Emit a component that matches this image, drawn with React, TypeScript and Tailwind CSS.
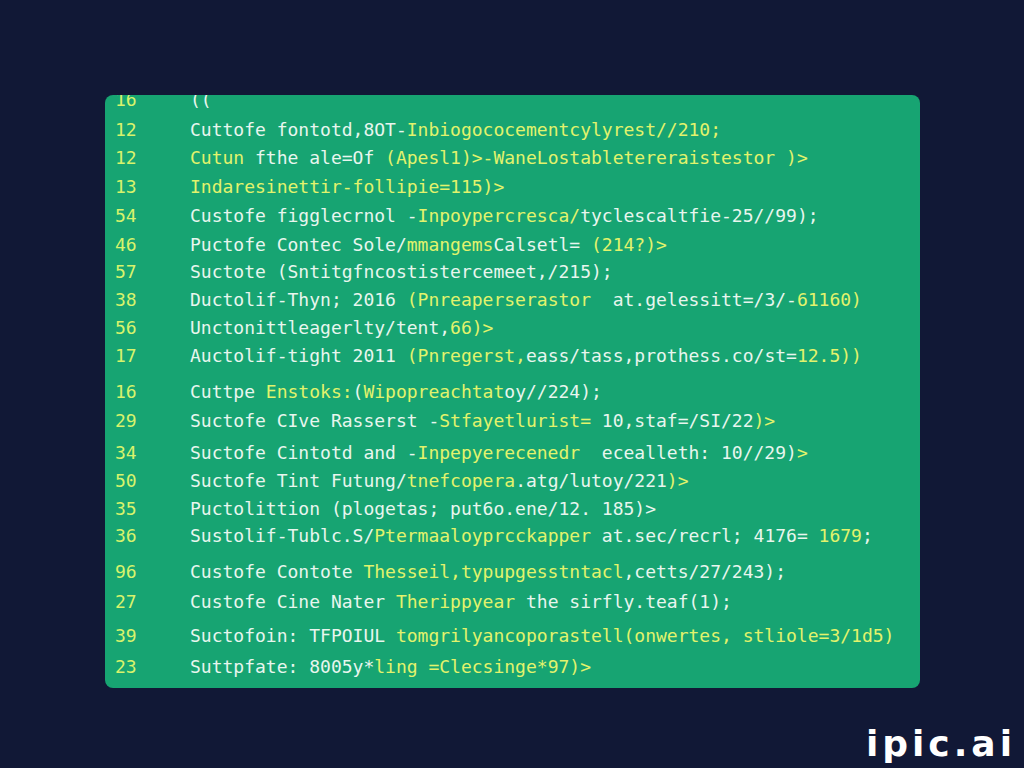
type Seg = [string, 'w' | 'y']

type Line = { n: string; gap: string; segs: Seg[] }

const lines: Line[] = [
  { n: '16', gap: '-mt-[9px]', segs: [['((', 'w']] },
  { n: '12', gap: 'mt-[2px]', segs: [['Cuttofe fontotd,8OT-', 'w'], ['Inbiogococementcylyrest//210;', 'y']] },
  { n: '12', gap: 'mt-0', segs: [['Cutun', 'y'], [' fthe ale=Of ', 'w'], ['(Apesl1)>-WaneLostabletereraistestor )>', 'y']] },
  { n: '13', gap: 'mt-[1px]', segs: [['Indaresinettir-follipie=115)>', 'y']] },
  { n: '54', gap: 'mt-[1px]', segs: [['Custofe figglecrnol -', 'w'], ['Inpoypercresca/', 'y'], ['tyclescaltfie-25//99);', 'w']] },
  { n: '46', gap: 'mt-[1px]', segs: [['Puctofe Contec Sole/', 'w'], ['mmangems', 'y'], ['Calsetl= ', 'w'], ['(214?)>', 'y']] },
  { n: '57', gap: '-mt-px', segs: [['Suctote (Sntitgfncostistercemeet,/215);', 'w']] },
  { n: '38', gap: 'mt-0', segs: [['Ductolif-Thyn; 2016 ', 'w'], ['(Pnreaperserastor', 'y'], ['  at.gelessitt=/3/-', 'w'], ['61160)', 'y']] },
  { n: '56', gap: 'mt-0', segs: [['Unctonittleagerlty/tent,', 'w'], ['66)>', 'y']] },
  { n: '17', gap: 'mt-0', segs: [['Auctolif-tight 2011 ', 'w'], ['(Pnregerst,', 'y'], ['eass/tass,prothess.co/st=', 'w'], ['12.5))', 'y']] },
  { n: '16', gap: 'mt-[8px]', segs: [['Cuttpe ', 'w'], ['Enstoks:', 'y'], ['(', 'w'], ['Wipopreachtat', 'y'], ['oy//224);', 'w']] },
  { n: '29', gap: 'mt-[1px]', segs: [['Suctofe CIve Rasserst -', 'w'], ['Stfayetlurist=', 'y'], [' 10,staf=/SI/22', 'w'], [')>', 'y']] },
  { n: '34', gap: 'mt-[4px]', segs: [['Suctofe Cintotd and -', 'w'], ['Inpepyerecenedr', 'y'], ['  ecealleth: 10//29)', 'w'], ['>', 'y']] },
  { n: '50', gap: 'mt-0', segs: [['Suctofe Tint Futung/', 'w'], ['tnefcopera', 'y'], ['.atg/lutoy/221', 'w'], [')>', 'y']] },
  { n: '35', gap: 'mt-0', segs: [['Puctolittion (plogetas; put6o.ene/12. 185)>', 'w']] },
  { n: '36', gap: '-mt-px', segs: [['Sustolif-Tublc.S/', 'w'], ['Ptermaaloyprcckapper', 'y'], [' at.sec/recrl; 4176= ', 'w'], ['1679', 'y'], [';', 'w']] },
  { n: '96', gap: 'mt-[8px]', segs: [['Custofe Contote ', 'w'], ['Thesseil,typupgesstntacl', 'y'], [',cetts/27/243);', 'w']] },
  { n: '27', gap: 'mt-[2px]', segs: [['Custofe Cine Nater ', 'w'], ['Therippyear', 'y'], [' the sirfly.teaf(1);', 'w']] },
  { n: '39', gap: 'mt-[6px]', segs: [['Suctofoin: TFPOIUL ', 'w'], ['tomgrilyancoporastell(onwertes, stliole=3/1d5)', 'y']] },
  { n: '23', gap: 'mt-[3px]', segs: [['Suttpfate: 8005y*', 'w'], ['ling =Clecsinge*97)>', 'y']] },
]

export default function App() {
  return (
    <div className="relative h-[768px] w-[1024px] overflow-hidden bg-[#111836] pt-[95px]">
      <div
        className="ml-[105px] h-[593px] w-[815px] overflow-hidden rounded-lg bg-[#17a472] pl-[10px] text-[18px] whitespace-pre"
        style={{ fontFamily: '"DejaVu Sans Mono", "Liberation Mono", monospace' }}
      >
        {lines.map((line, i) => (
          <div key={i} className={`flex h-[28px] leading-[28px] ${line.gap}`}>
            <span className="w-[75px] shrink-0 text-[#d8f36c]">{line.n}</span>
            <span>
              {line.segs.map(([t, c], j) => (
                <span key={j} className={c === 'y' ? 'text-[#e2f36c]' : 'text-[#e8f6ee]'}>
                  {t}
                </span>
              ))}
            </span>
          </div>
        ))}
      </div>
      <div
        className="absolute right-[8px] bottom-[-3px] text-[36px] font-bold tracking-[4px] text-white"
        style={{ fontFamily: '"DejaVu Sans", Verdana, sans-serif' }}
      >
        ipic.ai
      </div>
    </div>
  )
}
